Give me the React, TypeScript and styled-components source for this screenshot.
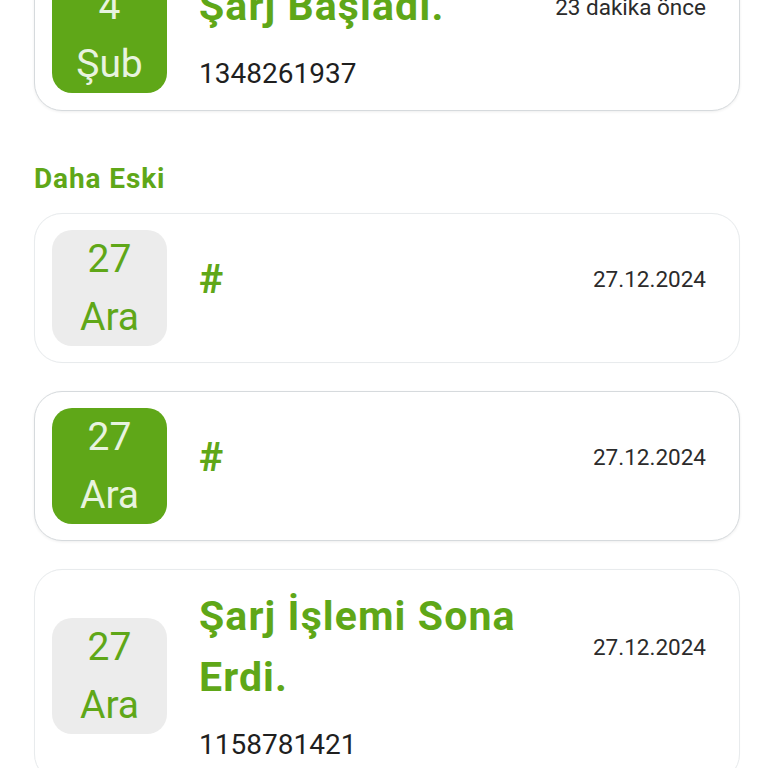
import styled, { createGlobalStyle } from 'styled-components';

const GREEN = '#5fa718';
const LIGHT = '#e8f3df';

const GlobalStyle = createGlobalStyle`
  html, body {
    margin: 0;
    padding: 0;
    background: #ffffff;
    font-family: Roboto, 'Liberation Sans', sans-serif;
    overflow: hidden;
  }
`;

type Notice = {
  day: string;
  month: string;
  title: string;
  time: string;
  code?: string;
  active?: boolean;
};

const recent: Notice[] = [
  { day: '4', month: 'Şub', title: 'Şarj Başladı.', time: '23 dakika önce', code: '1348261937', active: true },
];

const older: Notice[] = [
  { day: '27', month: 'Ara', title: '#', time: '27.12.2024' },
  { day: '27', month: 'Ara', title: '#', time: '27.12.2024', active: true },
  { day: '27', month: 'Ara', title: 'Şarj İşlemi Sona Erdi.', time: '27.12.2024', code: '1158781421' },
];

const Styled = {
  Page: styled.main`
    padding: 0 28px 0 34px;
    margin-top: -41px;
    display: flex;
    flex-direction: column;
  `,
  Section: styled.section`
    display: flex;
    flex-direction: column;
    gap: 28px;
  `,
  Heading: styled.h2`
    margin: 48px 0 14px;
    font-size: 28px;
    line-height: 40px;
    font-weight: 700;
    color: ${GREEN};
    letter-spacing: 0.9px;
  `,
  Card: styled.article<{ $active?: boolean }>`
    display: flex;
    align-items: center;
    gap: 32px;
    padding: 16px 33px 16px 17px;
    border: 1px solid ${({ $active }) => ($active ? '#d6dadd' : '#e8ebed')};
    border-radius: 28px;
    background: #fff;
    box-shadow: ${({ $active }) => ($active ? '0 1px 3px rgba(0,0,0,0.07)' : '0 0 1px rgba(0,0,0,0.04)')};
  `,
  Badge: styled.div<{ $active?: boolean }>`
    flex: none;
    width: 115px;
    height: 116px;
    border-radius: 20px;
    background: ${({ $active }) => ($active ? GREEN : '#ececec')};
    color: ${({ $active }) => ($active ? LIGHT : GREEN)};
    display: flex;
    flex-direction: column;
    align-items: center;
    justify-content: center;
    font-size: 39px;
    line-height: 58px;
  `,
  Main: styled.div<{ $short?: boolean }>`
    flex: 1;
    min-width: 0;
    display: flex;
    flex-direction: column;
    padding-bottom: ${({ $short }) => ($short ? '18px' : '0')};
  `,
  TitleRow: styled.div`
    display: flex;
    align-items: center;
    justify-content: space-between;
    gap: 40px;
  `,
  Title: styled.h3`
    margin: 0;
    font-size: 41px;
    line-height: 61px;
    font-weight: 700;
    color: ${GREEN};
    letter-spacing: 1.1px;
  `,
  Time: styled.span`
    flex: none;
    font-size: 22.5px;
    color: #2b2b2b;
  `,
  Code: styled.p`
    margin: 17px 0 0;
    font-size: 28px;
    line-height: 40px;
    color: #1f1f1f;
  `,
};

const NoticeCard = ({ item }: { item: Notice }) => (
  <Styled.Card $active={item.active}>
    <Styled.Badge $active={item.active}>
      <span>{item.day}</span>
      <span>{item.month}</span>
    </Styled.Badge>
    <Styled.Main $short={!item.code}>
      <Styled.TitleRow>
        <Styled.Title>{item.title}</Styled.Title>
        <Styled.Time>{item.time}</Styled.Time>
      </Styled.TitleRow>
      {item.code && <Styled.Code>{item.code}</Styled.Code>}
    </Styled.Main>
  </Styled.Card>
);

const App = () => (
  <>
    <GlobalStyle />
    <Styled.Page>
      <Styled.Section>
        {recent.map((n, i) => (
          <NoticeCard key={i} item={n} />
        ))}
      </Styled.Section>
      <Styled.Heading>Daha Eski</Styled.Heading>
      <Styled.Section>
        {older.map((n, i) => (
          <NoticeCard key={i} item={n} />
        ))}
      </Styled.Section>
    </Styled.Page>
  </>
);

export default App;
